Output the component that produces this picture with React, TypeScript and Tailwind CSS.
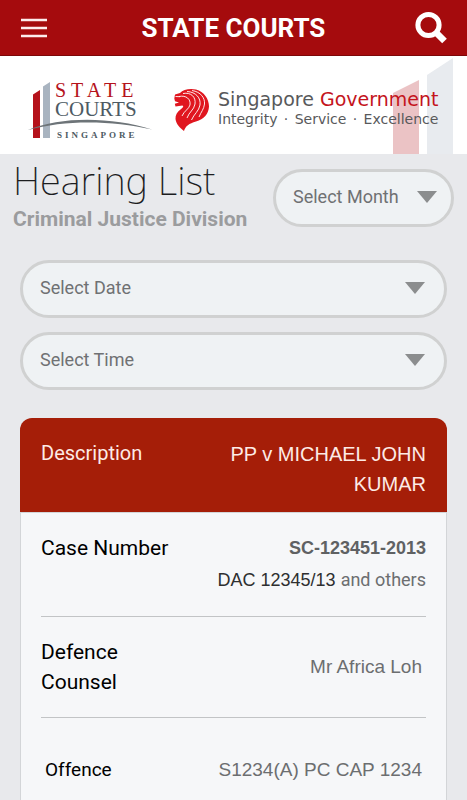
import React, { useState } from 'react'

const months = ['January', 'February', 'March', 'April', 'May', 'June']
const dates = ['1 June 2013', '2 June 2013', '3 June 2013']
const times = ['9.00 am', '11.00 am', '2.30 pm']

const Header = () => (
  <header className="flex h-14 items-center justify-between border-b border-[#7d0708] bg-[#a50b0d] pl-5 pr-4 pt-px text-white">
    <button type="button" aria-label="Open menu">
      <svg width="28" height="20" viewBox="0 0 28 20" fill="none" stroke="#fdecec" strokeWidth="2.4">
        <path d="M1 2h26M1 10h26M1 18h26" />
      </svg>
    </button>
    <h1 className="pl-1 font-[Roboto,sans-serif] text-[26px] font-bold">STATE COURTS</h1>
    <button type="button" aria-label="Search">
      <svg width="36" height="34" viewBox="0 0 36 34" fill="none" stroke="#fff">
        <circle cx="13.500" cy="14" r="10.600" strokeWidth="5" />
        <path d="M20.500 21l9 9" strokeWidth="6.500" />
      </svg>
    </button>
  </header>
)

const CourtsLogo = () => (
  <svg width="128" height="60" viewBox="26 80 128 60" className="shrink-0">
    <path d="M33 94.500L40 90v48h-7z" fill="#b5121b" />
    <path d="M43 86.500L50 82v56h-7z" fill="#a9b4c0" />
    <path d="M28 130C62 116 112 117 152 129.500C112 120.500 66 119.500 28 130z" fill="#6d7478" />
    <text x="55" y="97" className="fill-[#b5121b] font-['Liberation_Serif',serif] text-[20px] tracking-[5px]">
      STATE
    </text>
    <text x="55" y="116" className="fill-[#4d5a63] font-['Liberation_Serif',serif] text-[21px]">
      COURTS
    </text>
    <text x="57" y="138" className="fill-[#4d5a63] font-['Liberation_Serif',serif] text-[9px] font-bold tracking-[3px]">
      SINGAPORE
    </text>
  </svg>
)

const Lion = () => (
  <svg width="36" height="44" viewBox="0 0 36 44" className="shrink-0">
    <path
      d="M1 6.500L6 5C9 1.500 16 0 22 1.500C30 3.500 35 11 35 18.500C34.500 26 30 31 22 33.500C15 35.500 11.500 38 10 43C6 40 2 36 1.500 31C1.300 27 3 24 6.500 21.500C9 19.500 10 18.500 8.500 17.500L1.500 18.500L.8 15.800L5 14.500L1 13.300L.3 10.500z"
      fill="#e0161f"
    />
    <path
      d="M18 2.500C27 4 31 10 30.500 16C30 21 27 24 25 29M13 3.500C22 4 27 10 26 17C25 23 20 26 17.500 32M9 5.500C17 4 22 9 21 16C20 22 15 24 13 30M5 8.500C12 7 17 11 16 17C15 21 10 23 8 28M1.500 8.500L6 8.700"
      fill="none"
      stroke="#fff"
      strokeWidth=".9"
    />
  </svg>
)

const Banner = () => (
  <div className="relative flex h-[98px] items-center gap-5 bg-white pl-[26px] pt-[10px]">
    {/* faded bars in the corner */}
    <svg width="62" height="97" viewBox="0 0 62 97" className="absolute bottom-0 right-3">
      <path d="M0 36L26 23v74H0z" fill="#ebc3c5" />
      <path d="M34 18L60 1v96H34z" fill="#e8ebef" />
    </svg>
    <CourtsLogo />
    <div className="relative flex items-center gap-2">
      <Lion />
      <div className="whitespace-nowrap pb-1 font-['DejaVu_Sans',sans-serif] text-[#58595b]">
        <p className="text-[19px] leading-[22px]">
          Singapore <span className="text-[#c4141c]">Government</span>
        </p>
        <p className="flex justify-between text-[14px] leading-[18px]">
          <span>Integrity</span>
          <span>·</span>
          <span>Service</span>
          <span>·</span>
          <span>Excellence</span>
        </p>
      </div>
    </div>
  </div>
)

const Select = ({ id, label, options, className = '', arrowClassName = 'right-[22px]' }) => {
  const [value, setValue] = useState('')

  return (
    <div className={`relative ${className}`}>
      <select
        id={id}
        aria-label={label}
        value={value}
        onChange={e => setValue(e.target.value)}
        className="block h-[58px] w-full appearance-none rounded-full border-[3px] border-[#d0d1d1] bg-[#eff2f4] pb-1 pl-[17px] pr-12 font-[Roboto,sans-serif] text-[18px] text-[#6f7173]"
      >
        <option value="">{label}</option>
        {options.map(option => (
          <option key={option}>{option}</option>
        ))}
      </select>
      <svg
        width="20"
        height="12"
        viewBox="0 0 20 12"
        className={`pointer-events-none absolute top-[22px] ${arrowClassName}`}
      >
        <path d="M0 0h20L10 12z" fill="#8b8d8e" />
      </svg>
    </div>
  )
}

const CaseCard = () => (
  <dl className="flex grow flex-col font-['Liberation_Sans',sans-serif]">
    <div className="flex justify-between rounded-t-xl bg-[#a51e08] px-[21px] pb-[13px] pt-5 text-[20px] leading-[30px] text-[#fdebe6]">
      <dt className="font-[Roboto,sans-serif]">Description</dt>
      <dd className="w-52 pt-px text-right">PP v MICHAEL JOHN KUMAR</dd>
    </div>
    <div className="grow border-x border-t border-[#d3d5d8] bg-[#f6f7f9] px-5 text-[#6c6e70]">
      <div className="flex justify-between border-b border-[#c2c4c6] py-5 text-[18px] leading-[31px]">
        <dt className="font-[Roboto,sans-serif] text-[21px] text-black">Case Number</dt>
        <dd className="text-right">
          <p className="font-bold text-[#5f6163]">SC-123451-2013</p>
          <p>
            <span className="text-[#2e2f30]">DAC 12345/13</span>{' '}
            <span className="font-[Roboto,sans-serif]">and others</span>
          </p>
        </dd>
      </div>
      <div className="flex items-center justify-between border-b border-[#c2c4c6] py-5 text-[19px]">
        <dt className="w-28 font-[Roboto,sans-serif] text-[21px] leading-[30px] text-black">
          Defence Counsel
        </dt>
        <dd className="pr-1">Mr Africa Loh</dd>
      </div>
      <div className="flex items-center justify-between px-1 py-9 text-[19px] leading-[31px]">
        <dt className="font-[Roboto,sans-serif] text-black">Offence</dt>
        <dd>S1234(A) PC CAP 1234</dd>
      </div>
    </div>
  </dl>
)

export default function App() {
  return (
    <div className="flex min-h-screen flex-col bg-[#e8e9ec]">
      <Header />
      <Banner />
      <main className="flex grow flex-col">
        <div className="flex items-start justify-between px-[13px] pt-px">
          <div>
            <h2 className="font-['Noto_Sans',sans-serif] text-[38px] font-extralight leading-[50px] text-[#1c1d1f]">
              Hearing List
            </h2>
            <p className="font-[Roboto,sans-serif] text-[21px] font-bold leading-7 text-[#9b9c9e]">
              Criminal Justice Division
            </p>
          </div>
          <Select
            id="month"
            label="Select Month"
            options={months}
            className="mt-[14px] w-[181px]"
            arrowClassName="right-[17px]"
          />
        </div>
        <div className="flex grow flex-col px-5 pt-[27px]">
          <div className="mb-7 flex flex-col gap-[14px]">
            <Select id="date" label="Select Date" options={dates} />
            <Select id="time" label="Select Time" options={times} />
          </div>
          <CaseCard />
        </div>
      </main>
    </div>
  )
}
